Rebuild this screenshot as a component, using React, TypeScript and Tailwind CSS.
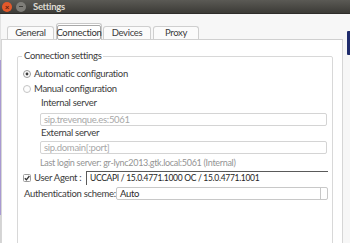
function Radio({ on }: { on?: boolean }) {
  return (
    <svg width="8" height="8" viewBox="0 0 8 8" className="shrink-0">
      <circle cx="4" cy="4" r="3.5" fill="#fdfdfd" stroke={on ? '#9a9a9a' : '#c4c4c4'} />
      {on && <circle cx="4" cy="4" r="1.4" fill="#3a3a3a" />}
    </svg>
  );
}

function Check() {
  return (
    <svg width="8" height="8" viewBox="0 0 8 8" className="shrink-0">
      <rect x="0.5" y="0.5" width="7" height="7" rx="1" fill="#fdfdfd" stroke="#9c9c9c" />
      <path d="M1.8 4.2 L3.4 5.8 L6.4 2" fill="none" stroke="#333" strokeWidth="1.3" />
    </svg>
  );
}

function Tab({ label, w }: { label: string; w: string }) {
  return (
    <div className={`${w} h-[13px] flex items-center justify-center border border-b-0 border-[#cfcfcf] rounded-t-[3px] bg-[#fbfbfb] text-[#3c3c3c]`}>
      {label}
    </div>
  );
}

function TitleBar() {
  return (
    <div className="h-[14px] shrink-0 flex items-center bg-gradient-to-b from-[#5b5a55] to-[#3c3b37] border-b border-[#2e2d2a]">
      <div className="ml-[2px] w-[10px] h-[10px] rounded-full bg-[#e5592a] flex items-center justify-center text-[8px] leading-none text-[#5a2010] font-bold">
        ×
      </div>
      <div className="ml-[4px] w-[10px] h-[10px] rounded-full bg-[#7f7e79] flex items-center justify-center">
        <div className="w-[4px] h-[1px] bg-[#3c3b37]" />
      </div>
      <span className="ml-[7px] font-bold text-[#dfdbd2] text-[9.5px] leading-none">Settings</span>
    </div>
  );
}

export default function App() {
  return (
    <div className="w-[350px] h-[243px] overflow-hidden whitespace-nowrap bg-[#f7f7f7] font-['Lato',sans-serif] text-[9.5px] tracking-[-0.3px] leading-[12px] text-[#3c3c3c] flex flex-col">
      <TitleBar />
      <div className="flex flex-1 min-h-0">
        {/* desktop peeking on the left */}
        <div className="w-[1px] flex flex-col">
          <div className="h-[46px] bg-[#e2e2e2]" />
          <div className="h-[155px] bg-[#a99ad2]" />
          <div className="flex-1 bg-[#d4d4d4]" />
        </div>

        {/* notebook */}
        <div className="w-[342px] flex flex-col">
          <div className="h-[26px] shrink-0 flex items-end gap-[2px] pl-[6px] border-b border-[#d0d0d0]">
            <Tab label="General" w="w-[47px]" />
            <div className="relative w-[46px] h-[17px] -mb-px flex items-center justify-center border border-b-0 border-[#c8c8c8] rounded-t-[3px] bg-white">
              <div className="w-[44px] h-[15px] mt-[1px] flex items-center justify-center border border-[#a9a9a9] rounded-[2px] text-[#333]">
                Connection
              </div>
            </div>
            <div className="-ml-px">
              <Tab label="Devices" w="w-[48px]" />
            </div>
            <Tab label="Proxy" w="w-[46px]" />
          </div>

          <div className="flex-1 bg-white border-l border-r border-[#d6d6d6] pl-[15px] pt-[10px]">
            <fieldset className="w-[316px] border border-[#d8d8d8] rounded-[2px] pb-[60px]">
              <legend className="ml-[4px] px-[2px] leading-[12px] text-[#3a3a3a]">Connection settings</legend>
              <div className="flex flex-col pl-[5px] pr-[4px] mt-[4px]">
                <div className="h-[15px] flex items-center gap-[3px]">
                  <Radio on />
                  <span>Automatic configuration</span>
                </div>
                <div className="h-[15px] flex items-center gap-[3px]">
                  <Radio />
                  <span>Manual configuration</span>
                </div>
                <div className="h-[14px] flex items-center pl-[18px]">Internal server</div>
                <div className="mt-[3px] ml-[17px] h-[13px] w-[287px] flex items-center border border-[#d4d4d4] rounded-[2px] pl-[3px] text-[#a8a8a8]">
                  sip.trevenque.es:5061
                </div>
                <div className="h-[13px] flex items-center pl-[18px]">External server</div>
                <div className="mt-[2px] ml-[17px] h-[13px] w-[287px] flex items-center border border-[#d4d4d4] rounded-[2px] pl-[3px] text-[#a8a8a8]">
                  sip.domain[:port]
                </div>
                <div className="mt-[2px] h-[14px] flex items-center pl-[17px] text-[#949494] text-[9px] tracking-[-0.3px]">
                  Last login server: gr-lync2013.gtk.local:5061 (Internal)
                </div>
                <div className="h-[15px] grid grid-cols-[8px_55px_1fr] items-center">
                  <Check />
                  <span className="pl-[3px] overflow-hidden">User Agent :</span>
                  <div className="h-[14px] flex items-center border-t border-l border-[#5a5a5a] pl-[3px] text-[#1e1e1e] text-[8.5px] tracking-[-0.3px]">
                    UCCAPI / 15.0.4771.1000 OC / 15.0.4771.1001
                  </div>
                </div>
                <div className="mt-[1px] h-[15px] grid grid-cols-[93px_1fr] items-center">
                  <span className="pl-[1px]">Authentication scheme:</span>
                  <div className="h-[13px] flex items-center border border-[#c8c8c8] rounded-[2px] text-[#2a2a2a]">
                    <span className="flex-1 pl-[3px]">Auto</span>
                    <div className="w-[7px] h-full border-l border-[#c8c8c8]" />
                  </div>
                </div>
              </div>
            </fieldset>
          </div>
        </div>

        {/* edge of another window on the right */}
        <div className="w-[7px] pt-[17px] flex">
          <div className="ml-[4px] w-[3px] h-[24px] bg-[#1f2c6c] rounded-l-[1px]" />
        </div>
      </div>
    </div>
  );
}
